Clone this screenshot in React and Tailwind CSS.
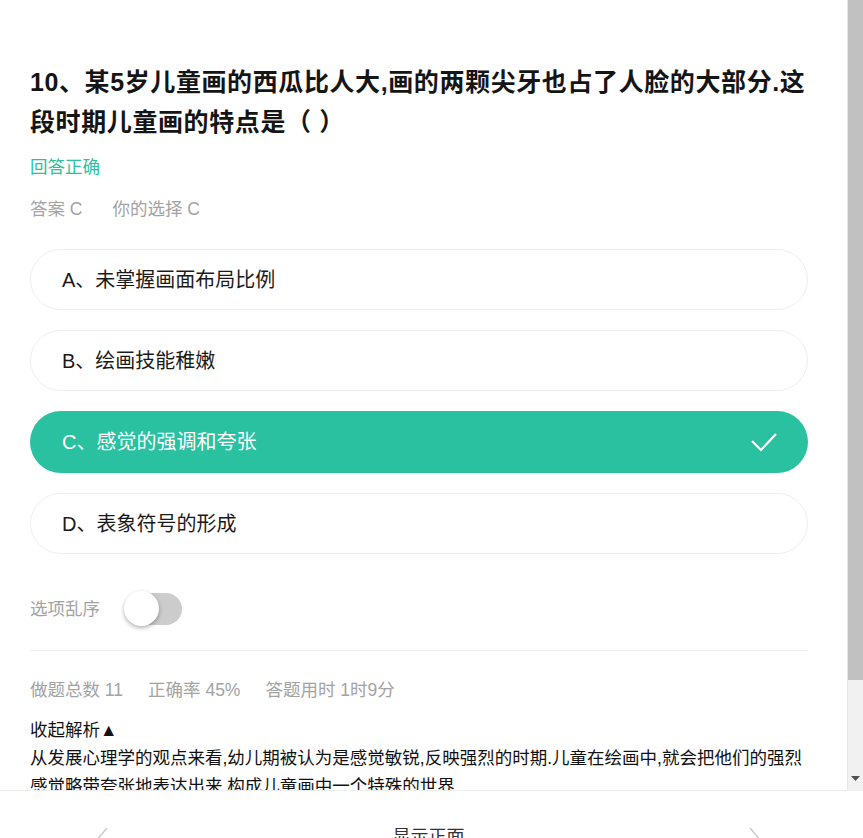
export default function App() {
  const font = { fontFamily: '"Liberation Sans", "Noto Sans CJK SC", sans-serif' };
  const options = [
    { key: "A", text: "A、未掌握画面布局比例" },
    { key: "B", text: "B、绘画技能稚嫩" },
    { key: "C", text: "C、感觉的强调和夸张", correct: true },
    { key: "D", text: "D、表象符号的形成" },
  ];
  return (
    <div className="h-[838px] w-[863px] overflow-hidden flex flex-col bg-white" style={font}>
      <div className="h-[790px] shrink-0 flex">
        <div className="flex-1 min-w-0 overflow-hidden">
          <div className="pl-[30px] pr-[39px] pt-[62px]">
            <h1 className="text-[25px] leading-[40px] font-bold tracking-[0.6px] text-[#151515]">
              10、某5岁儿童画的西瓜比人大,画的两颗尖牙也占了人脸的大部分.这段时期儿童画的特点是（ ）
            </h1>
            <div className="mt-[11px] text-[17.5px] leading-[28px] text-[#2ac1a1]">回答正确</div>
            <div className="mt-[14px] flex gap-[30px] text-[17.5px] leading-[28px] text-[#a3a3a3]">
              <span>答案 C</span>
              <span>你的选择 C</span>
            </div>
            <div className="mt-[26px] flex flex-col gap-[20px]">
              {options.map((o) =>
                o.correct ? (
                  <div
                    key={o.key}
                    className="h-[62px] rounded-full bg-[#29c1a0] flex items-center justify-between pl-[32px] pr-[30px]"
                  >
                    <span className="text-[20px] text-white">{o.text}</span>
                    <svg width="28" height="22" viewBox="0 0 28 22" fill="none">
                      <polyline points="2,10 11,19 26,3" stroke="white" strokeWidth="2.2" />
                    </svg>
                  </div>
                ) : (
                  <div
                    key={o.key}
                    className="h-[61px] rounded-full border border-[#eeeeee] flex items-center pl-[31px]"
                  >
                    <span className="text-[20px] text-[#1a1a1a]">{o.text}</span>
                  </div>
                )
              )}
            </div>
            <div className="mt-[37px] flex items-center gap-[24px]">
              <span className="text-[17.5px] leading-[28px] text-[#a3a3a3]">选项乱序</span>
              <div className="relative w-[58px] h-[35px] flex items-center">
                <div className="w-[56px] h-[32px] ml-[2px] rounded-full bg-[#cccccc]" />
                <div className="absolute left-0 top-0 w-[35px] h-[35px] rounded-full bg-white shadow-[0_2px_4px_rgba(0,0,0,0.3)]" />
              </div>
            </div>
            <div className="mt-[24px] h-px bg-[#eeeeee]" />
            <div className="mt-[25px] flex gap-[25px] text-[17.5px] leading-[28px] text-[#a3a3a3]">
              <span>做题总数 11</span>
              <span>正确率 45%</span>
              <span>答题用时 1时9分</span>
            </div>
            <div className="mt-[12px] text-[17.5px] leading-[28px] text-[#111111]">收起解析▲</div>
            <p className="text-[17.5px] leading-[28px] text-[#111111]">
              从发展心理学的观点来看,幼儿期被认为是感觉敏锐,反映强烈的时期.儿童在绘画中,就会把他们的强烈感觉略带夸张地表达出来,构成儿童画中一个特殊的世界
            </p>
          </div>
        </div>
        <div className="w-[16px] shrink-0 flex flex-col bg-[#f1f1f1] border-l border-[#e6e6e6]">
          <div className="h-[680px] bg-[#c1c1c1]" />
          <div className="flex-1 flex items-end justify-center pb-[9px]">
            <svg width="9" height="5" viewBox="0 0 9 5">
              <polygon points="0,0 9,0 4.5,5" fill="#505050" />
            </svg>
          </div>
        </div>
      </div>
      <div className="h-[94px] shrink-0 border-t border-[#eeeeee] flex items-center justify-between pl-[97px] pr-[103px]">
        <svg width="11" height="22" viewBox="0 0 11 22" fill="none">
          <polyline points="10,1 1.5,11 10,21" stroke="#cccccc" strokeWidth="1.5" />
        </svg>
        <span className="text-[18px] text-[#333333]">显示正面</span>
        <svg width="11" height="22" viewBox="0 0 11 22" fill="none">
          <polyline points="1,1 9.5,11 1,21" stroke="#cccccc" strokeWidth="1.5" />
        </svg>
      </div>
    </div>
  );
}
